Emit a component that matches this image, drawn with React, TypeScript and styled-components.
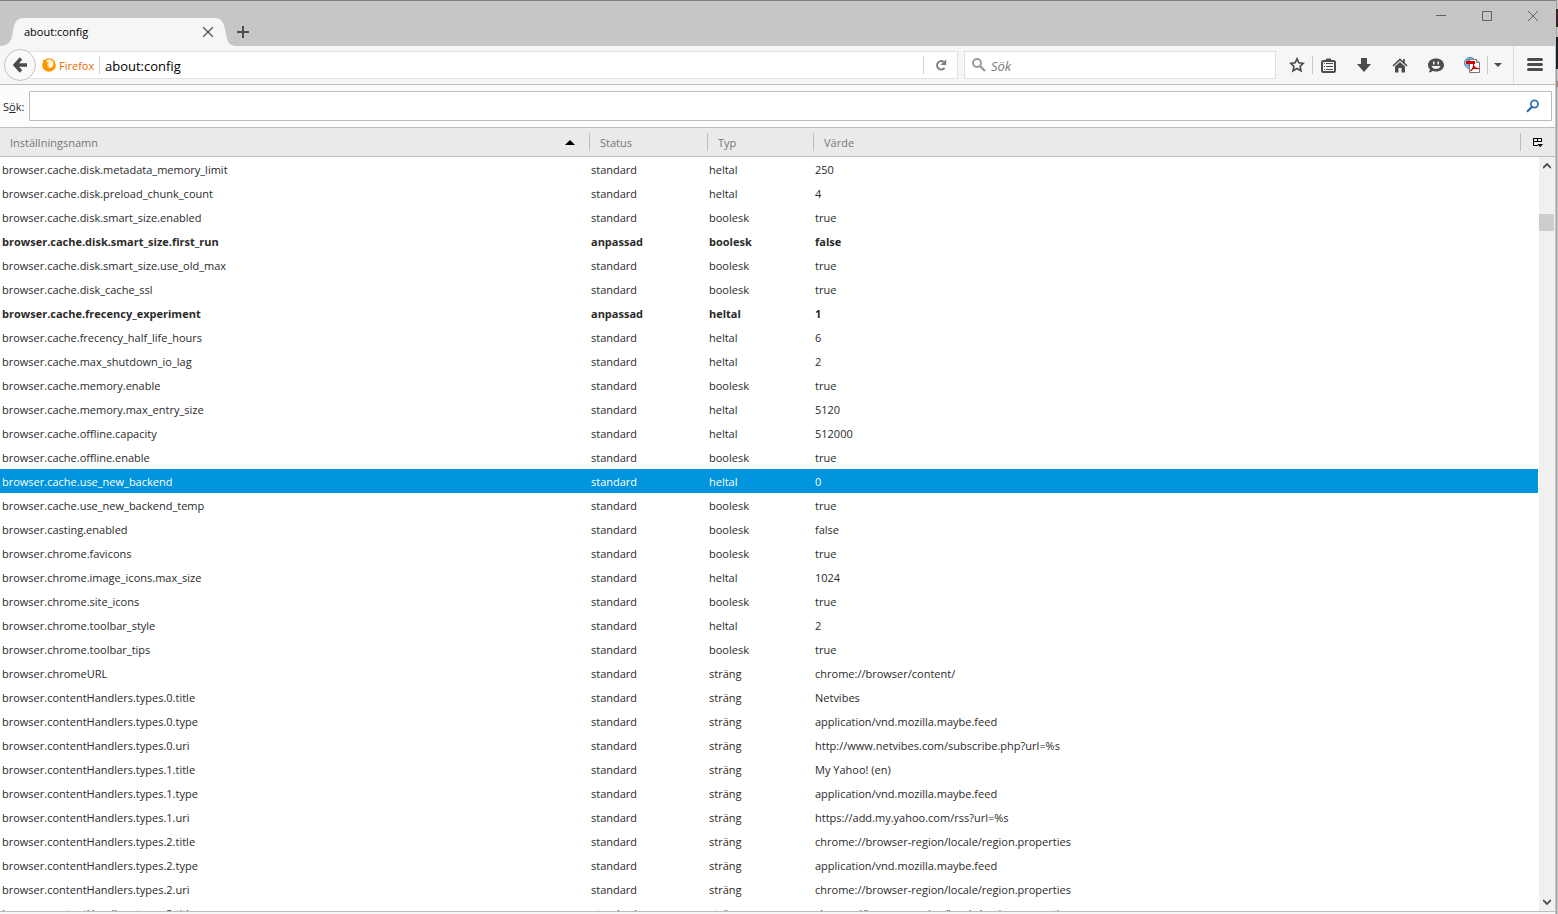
import React from 'react';
import styled, { createGlobalStyle } from 'styled-components';

const GlobalStyle = createGlobalStyle`
  * { box-sizing: border-box; }
  html, body { margin: 0; height: 100%; overflow: hidden; }
  body, button, input, table {
    font-family: 'Open Sans', 'Noto Sans', sans-serif;
    font-size: 11px;
    color: #2a2a2a;
  }
  button { background: none; border: 0; padding: 0; margin: 0; }
  svg { display: block; }
`;

const Desktop = styled.div`
  display: flex;
  height: 100vh;
  background: #c6c6c6;
`;

const DesktopEdge = styled.div`
  flex: 0 0 2px;
  background:
    linear-gradient(180deg, transparent 0 9px, #3a2424 9px 27px, transparent 27px 37px, #1c2226 37px 69px, transparent 69px 81px, #a08880 81px 87px, transparent 87px),
    linear-gradient(90deg, #a3a3a3 1px, #c9c9c9 1px);
`;

const Window = styled.div`
  flex: 1;
  min-width: 0;
  display: flex;
  flex-direction: column;
  background: #f6f6f6;
`;

const TitleBar = styled.header`
  display: flex;
  align-items: flex-end;
  justify-content: space-between;
  flex: 0 0 46px;
  background: #c6c6c6;
  border-top: 1px solid #7f7f7f;
`;

const TabStrip = styled.div`
  display: flex;
  height: 28px;
`;

const Tab = styled.div`
  display: flex;
  align-items: center;
  justify-content: space-between;
  width: 191px;
  background: #f6f6f6;
`;

const TabTitle = styled.span`
  padding-bottom: 2px;
  color: #000;
`;

const TabButton = styled.button`
  display: grid;
  place-items: center;
  width: 14px;
  height: 28px;
`;

const WindowControls = styled.div`
  display: flex;
  align-self: flex-start;
`;

const WindowButton = styled.button`
  display: grid;
  place-items: center;
  width: 46px;
  height: 30px;
`;

const Frame = styled.div`
  flex: 1;
  min-height: 0;
  display: flex;
  flex-direction: column;
  border-right: 1px solid #c4c4c4;
`;

const NavBar = styled.nav`
  display: flex;
  align-items: center;
  flex: 0 0 39px;
  padding-left: 4px;
  border-bottom: 1px solid #bdbdbd;
`;

const BackButton = styled.button`
  position: relative;
  display: grid;
  place-items: center;
  flex: 0 0 32px;
  height: 32px;
  border: 1px solid #c4c4c4;
  border-radius: 50%;
  background: #f9f9f9;
`;

const Field = styled.div`
  display: flex;
  align-items: center;
  height: 28px;
  background: #fff;
  border: 1px solid #e2e2e2;
`;

const UrlField = styled(Field)`
  flex: 1;
  min-width: 0;
  margin-left: -16px;
  padding-left: 21px;
`;

const SearchField = styled(Field)`
  flex: 0 0 312px;
  margin-left: 6px;
  padding-left: 7px;
`;

const Identity = styled.span`
  display: flex;
  align-items: center;
  gap: 3px;
  width: 58px;
  height: 18px;
  border-right: 1px solid #d0d0d0;
  color: #e66a00;
`;

const BarInput = styled.input`
  flex: 1;
  min-width: 0;
  height: 26px;
  padding: 2px 5px 0;
  border: 0;
  outline: 0;
  background: transparent;
  font-size: 13px;
  color: #000;
  &::placeholder { color: #777; font-style: italic; opacity: 1; }
`;

const ReloadButton = styled.button`
  display: grid;
  place-items: center;
  width: 34px;
  height: 18px;
  border-left: 1px solid #d0d0d0;
`;

const Tools = styled.div`
  display: flex;
  align-items: center;
  padding: 0 5px 0 6px;
`;

const ToolButton = styled.button<{ $width?: number; $divided?: boolean }>`
  display: grid;
  place-items: center;
  width: ${p => p.$width ?? 36}px;
  height: 18px;
  border-right: ${p => (p.$divided ? '1px solid #c8c8c8' : '0')};
`;

const MenuButton = styled.button`
  display: grid;
  place-items: center;
  width: 42px;
  height: 38px;
  border-left: 1px solid #dcdcdc;
`;

const FilterBar = styled.div`
  display: flex;
  align-items: center;
  flex: 0 0 42px;
  gap: 4px;
  padding: 0 3px;
  background: #fcfcfc;
`;

const FilterLabel = styled.label`
  width: 22px;
  white-space: nowrap;
`;

const FilterBox = styled.div`
  flex: 1;
  display: flex;
  align-items: center;
  height: 30px;
  padding-right: 11px;
  background: #fff;
  border: 1px solid #bdbdbd;
  border-radius: 1px;
`;

const Panel = styled.main`
  flex: 1;
  min-height: 0;
  margin-bottom: 2px;
  display: grid;
  grid-template-columns: minmax(0, 1fr) 17px;
  grid-template-rows: 29px minmax(0, 1fr);
  overflow: hidden;
  background: #fff;
  border-top: 1px solid #bdbdbd;
  border-bottom: 1px solid #bdbdbd;
`;

const PrefTable = styled.table`
  grid-area: 1 / 1 / -1 / -1;
  align-self: start;
  width: 100%;
  table-layout: fixed;
  border-spacing: 0;
`;

const Column = styled.col<{ $width?: number }>`
  width: ${p => (p.$width ? `${p.$width}px` : 'auto')};
`;

const HeadCell = styled.th`
  height: 29px;
  padding: 0;
  background: #eaeaea;
  border-bottom: 1px solid #bdbdbd;
`;

const HeadButton = styled.button`
  display: flex;
  align-items: center;
  justify-content: space-between;
  width: 100%;
  height: 18px;
  padding: 0 14px 0 10px;
  border-right: 1px solid #bdbdbd;
  color: #777;
`;

const PickerButton = styled.button`
  display: grid;
  place-items: center;
  width: 100%;
  height: 18px;
  padding-top: 2px;
`;

const Row = styled.tr<{ $modified?: boolean; $selected?: boolean }>`
  font-weight: ${p => (p.$modified ? 700 : 400)};
  color: ${p => (p.$selected ? '#fff' : '#2a2a2a')};
  background: ${p => (p.$selected ? '#0095dd' : '#fff')};
`;

const Cell = styled.td`
  height: 24px;
  padding: 2px 1px 0;
  line-height: 22px;
  white-space: nowrap;
  overflow: hidden;
  &:first-child { padding-left: 2px; }
`;

const ScrollBar = styled.div`
  grid-area: 2 / 2;
  z-index: 1;
  display: flex;
  flex-direction: column;
  background: #f0f0f0;
  border-left: 1px solid #fff;
`;

const ScrollButton = styled.button`
  display: grid;
  place-items: center;
  height: 18px;
`;

const ScrollTrack = styled.div`
  flex: 1;
  padding: 39px 1px 0 0;
`;

const ScrollThumb = styled.div`
  height: 17px;
  background: #cdcdcd;
`;

const Ink = '#4c4c4c';

type Pref = [name: string, type: string, value: string, state?: 'modified' | 'selected'];

const prefs: Pref[] = [
  ['browser.cache.disk.metadata_memory_limit', 'heltal', '250'],
  ['browser.cache.disk.preload_chunk_count', 'heltal', '4'],
  ['browser.cache.disk.smart_size.enabled', 'boolesk', 'true'],
  ['browser.cache.disk.smart_size.first_run', 'boolesk', 'false', 'modified'],
  ['browser.cache.disk.smart_size.use_old_max', 'boolesk', 'true'],
  ['browser.cache.disk_cache_ssl', 'boolesk', 'true'],
  ['browser.cache.frecency_experiment', 'heltal', '1', 'modified'],
  ['browser.cache.frecency_half_life_hours', 'heltal', '6'],
  ['browser.cache.max_shutdown_io_lag', 'heltal', '2'],
  ['browser.cache.memory.enable', 'boolesk', 'true'],
  ['browser.cache.memory.max_entry_size', 'heltal', '5120'],
  ['browser.cache.offline.capacity', 'heltal', '512000'],
  ['browser.cache.offline.enable', 'boolesk', 'true'],
  ['browser.cache.use_new_backend', 'heltal', '0', 'selected'],
  ['browser.cache.use_new_backend_temp', 'boolesk', 'true'],
  ['browser.casting.enabled', 'boolesk', 'false'],
  ['browser.chrome.favicons', 'boolesk', 'true'],
  ['browser.chrome.image_icons.max_size', 'heltal', '1024'],
  ['browser.chrome.site_icons', 'boolesk', 'true'],
  ['browser.chrome.toolbar_style', 'heltal', '2'],
  ['browser.chrome.toolbar_tips', 'boolesk', 'true'],
  ['browser.chromeURL', 'sträng', 'chrome://browser/content/'],
  ['browser.contentHandlers.types.0.title', 'sträng', 'Netvibes'],
  ['browser.contentHandlers.types.0.type', 'sträng', 'application/vnd.mozilla.maybe.feed'],
  ['browser.contentHandlers.types.0.uri', 'sträng', 'http://www.netvibes.com/subscribe.php?url=%s'],
  ['browser.contentHandlers.types.1.title', 'sträng', 'My Yahoo! (en)'],
  ['browser.contentHandlers.types.1.type', 'sträng', 'application/vnd.mozilla.maybe.feed'],
  ['browser.contentHandlers.types.1.uri', 'sträng', 'https://add.my.yahoo.com/rss?url=%s'],
  ['browser.contentHandlers.types.2.title', 'sträng', 'chrome://browser-region/locale/region.properties'],
  ['browser.contentHandlers.types.2.type', 'sträng', 'application/vnd.mozilla.maybe.feed'],
  ['browser.contentHandlers.types.2.uri', 'sträng', 'chrome://browser-region/locale/region.properties'],
  ['browser.contentHandlers.types.3.title', 'sträng', 'chrome://browser-region/locale/region.properties'],
];

const TabLeft = () => (
  <svg width="24" height="28"><path d="M0 28C8 28 11 24 12.500 16C14 5 16 0 24 0V28Z" fill="#f6f6f6" /></svg>
);
const TabRight = () => (
  <svg width="21" height="28"><path d="M0 0C7 0 9 5 10.500 14C12 23 14 28 21 28H0Z" fill="#f6f6f6" /></svg>
);

const FirefoxLogo = () => (
  <svg width="14" height="14" viewBox="0 0 14 14">
    <circle cx="7" cy="7" r="6.800" fill="#ff9500" />
    <path d="M4.500 2.200C6 1 9.500 1.200 10.800 3.200C12 5 11.600 8 9.800 9.300C8.300 10.300 5.800 10 4.900 8.600C6 9 7.200 8.700 7.700 7.900C6.500 7.800 5.300 7.600 5.200 6.500C5.200 5.700 6.300 5.800 6.900 5.300C6.300 4.500 5.400 3.900 4.300 4.300Z" fill="#fff3dc" />
    <path d="M1 3.200L1.600 1.200L3 2.600L4.800 2.600L4 4.600L2 6Z" fill="#ff9500" />
  </svg>
);

const PdfIcon = () => (
  <svg width="16" height="16" viewBox="0 0 16 16">
    <circle cx="6" cy="6" r="5.500" fill="#b9d8f2" stroke="#3f78b5" />
    <path d="M2 3.500C5 2 8 2 11 3.500M6 .5C3.500 3 3.500 8 6 11.500M1 8H7" fill="none" stroke="#4f8ac4" />
    <path d="M5.500 2.500H12.500L15.500 5.500V15.500H5.500Z" fill="#fff" stroke="#777" />
    <path d="M12.500 2.500V5.500H15.500" fill="#ddd" stroke="#777" />
    <path d="M2 4H11V7H2Z" fill="#d40000" />
    <path d="M9.500 7C10 10 8.500 12.500 6.500 14M9.800 9C10.500 11 12.500 12 15 11.500M8 12C9.500 11.200 11 11 12.500 11.200" fill="none" stroke="#c80000" strokeWidth="1.200" />
  </svg>
);

export default function App() {
  return (
    <Desktop>
      <GlobalStyle />
      <Window>
        <TitleBar>
          <TabStrip>
            <TabLeft />
            <Tab>
              <TabTitle>about:config</TabTitle>
              <TabButton aria-label="Stäng flik">
                <svg width="10" height="10"><path d="M0 0L10 10M10 0L0 10" stroke="#555" strokeWidth="1.300" /></svg>
              </TabButton>
            </Tab>
            <TabRight />
            <TabButton aria-label="Ny flik">
              <svg width="12" height="12"><path d="M6 0V12M0 6H12" stroke={Ink} strokeWidth="2" /></svg>
            </TabButton>
          </TabStrip>
          <WindowControls>
            <WindowButton aria-label="Minimera">
              <svg width="10" height="10"><path d="M0 4.500H10" stroke="#5f5f5f" /></svg>
            </WindowButton>
            <WindowButton aria-label="Maximera">
              <svg width="10" height="10"><path d="M.5 .5H9.500V9.500H.5Z" fill="none" stroke="#5f5f5f" /></svg>
            </WindowButton>
            <WindowButton aria-label="Stäng">
              <svg width="10" height="10"><path d="M0 0L10 10M10 0L0 10" stroke="#5f5f5f" /></svg>
            </WindowButton>
          </WindowControls>
        </TitleBar>
        <Frame>
          <NavBar>
            <BackButton aria-label="Bakåt">
              <svg width="14" height="16" viewBox="0 0 14 16">
                <path d="M8 1.500L2 8L8 14.500M2 8H14" fill="none" stroke={Ink} strokeWidth="3.400" />
              </svg>
            </BackButton>
            <UrlField>
              <Identity><FirefoxLogo />Firefox</Identity>
              <BarInput aria-label="Adress" defaultValue="about:config" />
              <ReloadButton aria-label="Läs om">
                <svg width="12" height="12" viewBox="0 0 12 12">
                  <path d="M8.600 2.800A4.200 4.200 0 1 0 9.500 9" fill="none" stroke="#7d7d7d" strokeWidth="2" />
                  <path d="M11.200 .3V6H5.600Z" fill="#7d7d7d" />
                </svg>
              </ReloadButton>
            </UrlField>
            <SearchField>
              <svg width="14" height="14" viewBox="0 0 14 14">
                <circle cx="5" cy="5" r="4" fill="none" stroke="#999" strokeWidth="1.900" />
                <path d="M8 8L13 13" stroke="#999" strokeWidth="2.400" />
              </svg>
              <BarInput aria-label="Sök på webben" placeholder="Sök" />
            </SearchField>
            <Tools>
              <ToolButton $width={31} $divided aria-label="Bokmärk">
                <svg width="16" height="16" viewBox="0 0 16 16">
                  <path d="M8 1.800L9.900 5.800L14.300 6.300L11.100 9.300L12 13.800L8 11.500L4 13.800L4.900 9.300L1.700 6.300L6.100 5.800Z" fill="none" stroke={Ink} strokeWidth="1.700" />
                </svg>
              </ToolButton>
              <ToolButton $width={31} aria-label="Bokmärken">
                <svg width="15" height="15" viewBox="0 0 15 15">
                  <path d="M4 3L5.500 .5H9.500L11 3Z" fill={Ink} />
                  <rect x="1" y="3" width="13" height="11" rx="1.500" fill="none" stroke={Ink} strokeWidth="2" />
                  <path d="M3 5.500H4M5 5.500H12M3 8.500H4M5 8.500H12M3 11.500H4M5 11.500H12" stroke={Ink} />
                </svg>
              </ToolButton>
              <ToolButton $width={40} aria-label="Hämtningar">
                <svg width="14" height="14" viewBox="0 0 14 14"><path d="M4 0H10V6H14L7 14L0 6H4Z" fill={Ink} /></svg>
              </ToolButton>
              <ToolButton $width={32} aria-label="Startsida">
                <svg width="16" height="15" viewBox="0 0 16 15">
                  <path d="M1 8L8 1.500L15 8M12 1V5" fill="none" stroke={Ink} strokeWidth="1.700" />
                  <path d="M3 8.500L8 4L13 8.500V14.500H9.500V10H6.500V14.500H3Z" fill={Ink} />
                </svg>
              </ToolButton>
              <ToolButton $width={40} aria-label="Hello">
                <svg width="16" height="15" viewBox="0 0 16 15">
                  <path d="M8 .5C12.500 .5 16 3.200 16 7C16 10.800 12.500 13.500 8 13.500C6.500 13.500 5.500 13.200 4.500 13C3.500 14 2 14.500 .5 14.200C1.500 13.500 2 12.500 2 11.500C.8 10.300 0 8.800 0 7C0 3.200 3.500 .5 8 .5Z" fill={Ink} />
                  <path d="M5 3.500H6.500V6.500H5ZM9.500 3.500H11V6.500H9.500ZM3.500 8H12.500C11.500 12 4.500 12 3.500 8Z" fill="#f6f6f6" />
                </svg>
              </ToolButton>
              <ToolButton $width={32} $divided aria-label="Skapa PDF"><PdfIcon /></ToolButton>
              <ToolButton $width={20} aria-label="Fler PDF-val">
                <svg width="8" height="4"><path d="M0 0H8L4 4Z" fill={Ink} /></svg>
              </ToolButton>
            </Tools>
            <MenuButton aria-label="Meny">
              <svg width="16" height="14">
                <path d="M1.500 1.500H14.500M1.500 6.500H14.500M1.500 11.500H14.500" stroke={Ink} strokeWidth="3" strokeLinecap="round" />
              </svg>
            </MenuButton>
          </NavBar>
          <FilterBar>
            <FilterLabel htmlFor="filter">S<u>ö</u>k:</FilterLabel>
            <FilterBox>
              <BarInput id="filter" />
              <svg width="14" height="14" viewBox="0 0 14 14">
                <circle cx="8.500" cy="5" r="3.600" fill="none" stroke="#2f78b7" strokeWidth="1.800" />
                <path d="M6 7.800L1 12.800" stroke="#2a62a5" strokeWidth="2" />
              </svg>
            </FilterBox>
          </FilterBar>
          <Panel>
            <PrefTable>
              <colgroup>
                <Column $width={590} />
                <Column $width={118} />
                <Column $width={106} />
                <Column />
                <Column $width={34} />
              </colgroup>
              <thead>
                <tr>
                  <HeadCell>
                    <HeadButton>
                      Inställningsnamn
                      <svg width="10" height="5"><path d="M0 5L5 0L10 5Z" fill="#000" /></svg>
                    </HeadButton>
                  </HeadCell>
                  <HeadCell><HeadButton>Status</HeadButton></HeadCell>
                  <HeadCell><HeadButton>Typ</HeadButton></HeadCell>
                  <HeadCell><HeadButton>Värde</HeadButton></HeadCell>
                  <HeadCell>
                    <PickerButton aria-label="Välj kolumner">
                      <svg width="10" height="10">
                        <path d="M.5 .5H8.500V4M.5 0V7.500H5M0 3.500H9M4.500 .5V4" fill="none" stroke="#000" />
                        <path d="M4.500 6H10L7.200 9.300Z" fill="#000" />
                      </svg>
                    </PickerButton>
                  </HeadCell>
                </tr>
              </thead>
              <tbody>
                {prefs.map(([name, type, value, state]) => (
                  <Row key={name} $modified={state === 'modified'} $selected={state === 'selected'}>
                    <Cell>{name}</Cell>
                    <Cell>{state === 'modified' ? 'anpassad' : 'standard'}</Cell>
                    <Cell>{type}</Cell>
                    <Cell colSpan={2}>{value}</Cell>
                  </Row>
                ))}
              </tbody>
            </PrefTable>
            <ScrollBar>
              <ScrollButton aria-label="Rulla upp">
                <svg width="8" height="6"><path d="M0 5L4 1L8 5" fill="none" stroke="#505050" strokeWidth="1.800" /></svg>
              </ScrollButton>
              <ScrollTrack><ScrollThumb /></ScrollTrack>
              <ScrollButton aria-label="Rulla ned">
                <svg width="8" height="6"><path d="M0 1L4 5L8 1" fill="none" stroke="#505050" strokeWidth="1.800" /></svg>
              </ScrollButton>
            </ScrollBar>
          </Panel>
        </Frame>
      </Window>
      <DesktopEdge />
    </Desktop>
  );
}
